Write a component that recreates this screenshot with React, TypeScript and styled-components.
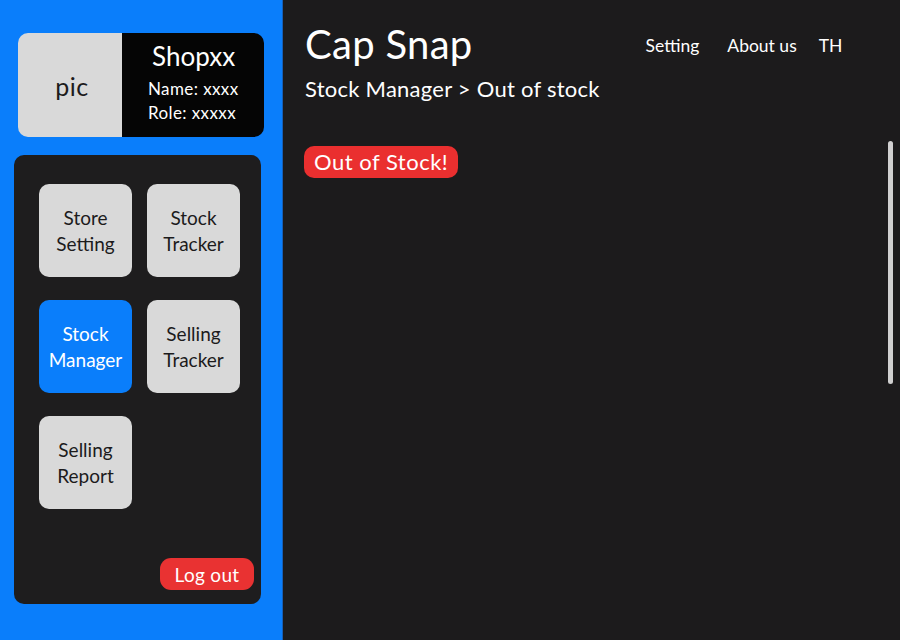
import React from "react";
import styled, { createGlobalStyle } from "styled-components";

const Global = createGlobalStyle`
  html, body { margin: 0; padding: 0; }
  body { font-family: Lato, "Open Sans", sans-serif; background: #1c1b1c; }
  * { box-sizing: border-box; }
`;

const Page = styled.div`
  display: flex;
  width: 900px;
  height: 640px;
  overflow: hidden;
`;

const Sidebar = styled.aside`
  width: 283px;
  flex: none;
  background: #0a7efb;
  border-right: 1px solid #1560b8;
  padding: 33px 18px 0 14px;
  display: flex;
  flex-direction: column;
  gap: 18px;
`;

const Profile = styled.div`
  margin-left: 4px;
  width: 246px;
  height: 104px;
  display: flex;
  border-radius: 10px;
  overflow: hidden;
`;

const Pic = styled.div`
  width: 104px;
  background: #d9d9d9;
  color: #1c1b1c;
  font-size: 25px;
  letter-spacing: 0.5px;
  display: flex;
  align-items: center;
  justify-content: center;
  padding: 2px 0 0 4px;
`;

const Info = styled.div`
  flex: 1;
  background: #050505;
  color: #fff;
  display: flex;
  flex-direction: column;
  padding: 8px 0 0 26px;
`;

const ShopName = styled.div`
  font-size: 26px;
  line-height: 30px;
  margin: 0 0 6px 4px;
`;

const InfoLine = styled.div`
  font-size: 17px;
  letter-spacing: 0.4px;
  line-height: 24px;
`;

const Nav = styled.nav`
  width: 247px;
  height: 449px;
  background: #1e1d1e;
  border-radius: 10px;
  padding: 29px 21px 14px 25px;
  display: flex;
  flex-direction: column;
`;

const Grid = styled.div`
  display: grid;
  grid-template-columns: 93px 93px;
  grid-auto-rows: 93px;
  column-gap: 15px;
  row-gap: 23px;
`;

const Tile = styled.button<{ $active?: boolean }>`
  border: none;
  border-radius: 10px;
  background: ${(p) => (p.$active ? "#0a7efb" : "#d9d9d9")};
  color: ${(p) => (p.$active ? "#fff" : "#1c1b1c")};
  font-family: inherit;
  font-size: 19px;
  line-height: 26px;
  padding: 0;
  text-align: center;
  cursor: pointer;
`;

const LogoutRow = styled.div`
  margin-top: auto;
  display: flex;
  justify-content: flex-end;
  margin-right: -14px;
`;

const RedPill = styled.button`
  border: none;
  background: #e93232;
  color: #fff;
  font-family: inherit;
  font-size: 19px;
  letter-spacing: 0.3px;
  border-radius: 11px;
  height: 32px;
  width: 94px;
  padding: 0;
  cursor: pointer;
`;

const Main = styled.main`
  flex: 1;
  position: relative;
  background: #1c1b1c;
  color: #fff;
  padding: 20px 0 0 22px;
`;

const Header = styled.header`
  display: flex;
  align-items: flex-start;
`;

const Title = styled.h1`
  margin: 0;
  font-weight: 400;
  font-size: 40px;
  letter-spacing: 0.3px;
  line-height: 48px;
`;

const TopNav = styled.div`
  display: flex;
  margin-left: 173px;
  margin-top: 15px;
  font-size: 17.5px;
`;

const NavLink = styled.span<{ $gap?: number }>`
  margin-left: ${(p) => p.$gap ?? 0}px;
`;

const Crumb = styled.div`
  font-size: 22px;
  letter-spacing: 0.25px;
  margin-top: 7px;
`;

const Badge = styled.div`
  display: inline-block;
  margin-top: 44px;
  margin-left: -1px;
  background: #ea2f2f;
  color: #fff;
  font-size: 22px;
  letter-spacing: 0.5px;
  line-height: 32px;
  height: 32px;
  border-radius: 10px;
  padding: 0 10px;
`;

const Scroll = styled.div`
  position: absolute;
  right: 7px;
  top: 141px;
  width: 5px;
  height: 243px;
  border-radius: 3px;
  background: #d0d0d0;
`;

export default function App() {
  return (
    <Page>
      <Global />
      <Sidebar>
        <Profile>
          <Pic>pic</Pic>
          <Info>
            <ShopName>Shopxx</ShopName>
            <InfoLine>Name: xxxx</InfoLine>
            <InfoLine>Role: xxxxx</InfoLine>
          </Info>
        </Profile>
        <Nav>
          <Grid>
            <Tile>Store<br />Setting</Tile>
            <Tile>Stock<br />Tracker</Tile>
            <Tile $active>Stock<br />Manager</Tile>
            <Tile>Selling<br />Tracker</Tile>
            <Tile>Selling<br />Report</Tile>
          </Grid>
          <LogoutRow>
            <RedPill>Log out</RedPill>
          </LogoutRow>
        </Nav>
      </Sidebar>
      <Main>
        <Header>
          <Title>Cap Snap</Title>
          <TopNav>
            <NavLink>Setting</NavLink>
            <NavLink $gap={28}>About us</NavLink>
            <NavLink $gap={22}>TH</NavLink>
          </TopNav>
        </Header>
        <Crumb>Stock Manager &gt; Out of stock</Crumb>
        <Badge>Out of Stock!</Badge>
        <Scroll />
      </Main>
    </Page>
  );
}
